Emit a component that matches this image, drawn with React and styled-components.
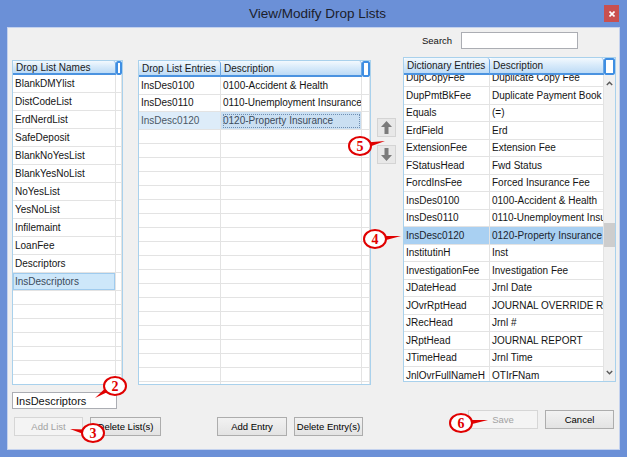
import React from "react";
import styled, { createGlobalStyle, css } from "styled-components";

const listNames = [
  "BlankDMYlist",
  "DistCodeList",
  "ErdNerdList",
  "SafeDeposit",
  "BlankNoYesList",
  "BlankYesNoList",
  "NoYesList",
  "YesNoList",
  "Infilemaint",
  "LoanFee",
  "Descriptors",
  "InsDescriptors",
];

const entries = [
  ["InsDes0100", "0100-Accident & Health"],
  ["InsDes0110", "0110-Unemployment Insurance"],
  ["InsDesc0120", "0120-Property Insurance"],
];

const dictionary = [
  ["DupCopyFee", "Duplicate Copy Fee"],
  ["DupPmtBkFee", "Duplicate Payment Book"],
  ["Equals", "(=)"],
  ["ErdField", "Erd"],
  ["ExtensionFee", "Extension Fee"],
  ["FStatusHead", "Fwd Status"],
  ["ForcdInsFee", "Forced Insurance Fee"],
  ["InsDes0100", "0100-Accident & Health"],
  ["InsDes0110", "0110-Unemployment Insurance"],
  ["InsDesc0120", "0120-Property Insurance"],
  ["InstitutinH", "Inst"],
  ["InvestigationFee", "Investigation Fee"],
  ["JDateHead", "Jrnl Date"],
  ["JOvrRptHead", "JOURNAL OVERRIDE R"],
  ["JRecHead", "Jrnl #"],
  ["JRptHead", "JOURNAL REPORT"],
  ["JTimeHead", "Jrnl Time"],
  ["JnlOvrFullNameH", "OTIrFNam"],
];

const GlobalStyle = createGlobalStyle`
  html, body {
    margin: 0;
    padding: 0;
    background: #ffffff;
  }
  body {
    font-family: "Liberation Sans", Arial, sans-serif;
  }
`;

const Window = styled.div`
  position: relative;
  width: 627px;
  height: 457px;
  box-sizing: border-box;
  background: #6b90d7;
  padding: 0 7px 7px 7px;
  display: flex;
  flex-direction: column;
`;

const TitleBar = styled.div`
  height: 27px;
  display: grid;
  grid-template-columns: 1fr auto 1fr;
  align-items: start;
`;

const Title = styled.div`
  grid-column: 2;
  margin-top: 6px;
  padding-left: 8px;
  font-size: 13.5px;
  color: #1b202b;
`;

const CloseButton = styled.div`
  grid-column: 3;
  justify-self: end;
  margin-top: 5px;
  margin-right: 1px;
  width: 15px;
  height: 17px;
  background: #c9504f;
  display: flex;
  align-items: center;
  justify-content: center;
`;

const Client = styled.div`
  flex: 1;
  background: #f0f0f0;
  border: 1px solid #c4d2ee;
  display: flex;
  padding: 4px 0 0 4px;
  min-height: 0;
`;

const Column = styled.div`
  display: flex;
  flex-direction: column;
  flex-shrink: 0;
  width: ${(p) => p.$w}px;
  margin-left: ${(p) => p.$ml || 0}px;
  padding-top: ${(p) => p.$pt || 0}px;
`;

const GridBox = styled.div`
  width: ${(p) => p.$w}px;
  height: 325px;
  box-sizing: border-box;
  border: 1px solid #a9d1ec;
  background: #ffffff;
  display: flex;
  flex-direction: column;
  overflow: hidden;
`;

const Row = styled.div`
  display: grid;
  grid-template-columns: ${(p) => p.$cols};
  height: ${(p) => p.$h}px;
  flex-shrink: 0;
`;

const HeaderCell = styled.div`
  box-sizing: border-box;
  background: linear-gradient(#f3f9fe, #d9ebfa 45%, #bddbf6);
  border-right: 1px solid #69a6e4;
  border-bottom: 2px solid #4b93e0;
  border-radius: 3px 3px 0 0;
  font-size: 10px;
  color: #1a1a1a;
  padding-left: 3px;
  display: flex;
  align-items: center;
  white-space: nowrap;
  overflow: hidden;
`;

const HeaderFiller = styled.div`
  box-sizing: border-box;
  background: #ffffff;
  border: 2px solid #3f8ee2;
  border-radius: 2px;
`;

const selStyles = {
  box: css`
    background: #cde7fa;
    box-shadow: inset 0 0 0 1px #9fcbee;
    color: #3b4a5a;
  `,
  dim: css`
    background: #ddecf9;
    color: #4a5866;
  `,
  focus: css`
    background: #cadff2;
    color: #3b4a5a;
    outline: 1px dotted #6f8fb2;
    outline-offset: -3px;
  `,
  hot: css`
    background: #a9d0f2;
    color: #1a2530;
  `,
};

const Cell = styled.div`
  box-sizing: border-box;
  border-right: 1px solid #e3e3e3;
  border-bottom: 1px solid #e3e3e3;
  font-size: 10px;
  color: #141414;
  padding-left: 2px;
  display: flex;
  align-items: center;
  white-space: nowrap;
  overflow: hidden;
  ${(p) => p.$sel && selStyles[p.$sel]}
`;

const GridBody = styled.div`
  flex: 1;
  display: flex;
  min-height: 0;
`;

const RowsArea = styled.div`
  flex: 1;
  overflow: hidden;
`;

const RowsScroll = styled.div`
  margin-top: ${(p) => p.$offset || 0}px;
`;

const ScrollBar = styled.div`
  width: 11px;
  background: #f0f0f0;
  display: flex;
  flex-direction: column;
  align-items: stretch;
`;

const ScrollArrow = styled.div`
  height: 17px;
  display: flex;
  align-items: center;
  justify-content: center;
`;

const ScrollTrack = styled.div`
  flex: 1;
`;

const ScrollThumb = styled.div`
  margin-top: ${(p) => p.$top}px;
  height: ${(p) => p.$h}px;
  background: #cdcdcd;
`;

const TextBox = styled.div`
  box-sizing: border-box;
  width: ${(p) => p.$w}px;
  height: 17px;
  margin-top: ${(p) => p.$mt || 0}px;
  background: #ffffff;
  border: 1px solid #abadb3;
  font-size: 11px;
  color: #111;
  padding-left: 3px;
  display: flex;
  align-items: center;
`;

const ButtonRow = styled.div`
  display: flex;
  gap: 7px;
  margin-top: ${(p) => p.$mt}px;
  padding-left: ${(p) => p.$pl || 0}px;
  padding-right: ${(p) => p.$pr || 0}px;
  justify-content: ${(p) => (p.$end ? "flex-end" : "flex-start")};
`;

const Button = styled.button`
  flex-shrink: 0;
  width: ${(p) => p.$w}px;
  height: 19px;
  padding: 0;
  font-family: inherit;
  font-size: 9.5px;
  border-radius: 0;
  border: 1px solid ${(p) => (p.disabled ? "#d6d6d6" : "#adadad")};
  background: ${(p) =>
    p.disabled ? "#f4f4f4" : "linear-gradient(#f2f2f2, #e3e3e3)"};
  color: ${(p) => (p.disabled ? "#a2a2a2" : "#000")};
`;

const MoveButton = styled.div`
  width: 19px;
  height: 19px;
  box-sizing: border-box;
  background: #e8e8e8;
  border: 1px solid #d4d4d4;
  display: flex;
  align-items: center;
  justify-content: center;
`;

const MoveStack = styled.div`
  display: flex;
  flex-direction: column;
  gap: 8px;
`;

const SearchRow = styled.div`
  display: flex;
  align-items: center;
  gap: 9px;
  padding-left: 19px;
  height: 16px;
  margin-bottom: 9px;
`;

const SearchLabel = styled.span`
  font-size: 9.5px;
  color: #111;
`;

const SearchInput = styled.div`
  box-sizing: border-box;
  width: 117px;
  height: 17px;
  background: #fff;
  border: 1px solid #abadb3;
`;

const CalloutWrap = styled.div`
  position: absolute;
  left: ${(p) => p.$x - 12}px;
  top: ${(p) => p.$y - 10}px;
  width: 24px;
  height: 20px;
`;

const CalloutSvg = styled.svg`
  position: absolute;
  left: 0;
  top: 0;
  overflow: visible;
`;

const CalloutNum = styled.span`
  position: absolute;
  inset: 0;
  display: flex;
  align-items: center;
  justify-content: center;
  font-family: "Liberation Serif", "Times New Roman", serif;
  font-weight: bold;
  font-size: 14px;
  color: #e00000;
  padding-top: 1px;
`;

function Callout({ x, y, tx, ty, n }) {
  const dx = tx - x;
  const dy = ty - y;
  const len = Math.hypot(dx, dy);
  const ux = dx / len;
  const uy = dy / len;
  const ex = 12 + ux * 10;
  const ey = 10 + uy * 8;
  const nx = -uy;
  const ny = ux;
  const pts = `${ex + nx * 2.2},${ey + ny * 2.2} ${ex - nx * 2.2},${
    ey - ny * 2.2
  } ${12 + dx},${10 + dy}`;
  return (
    <CalloutWrap $x={x} $y={y}>
      <CalloutSvg width="24" height="20">
        <polygon points={pts} fill="#e00000" />
        <ellipse
          cx="12"
          cy="10"
          rx="11"
          ry="9"
          fill="#ffffff"
          stroke="#e00000"
          strokeWidth="2"
        />
      </CalloutSvg>
      <CalloutNum>{n}</CalloutNum>
    </CalloutWrap>
  );
}

const ArrowIcon = ({ down }) => (
  <svg width="13" height="15" viewBox="0 0 13 15">
    <path
      d={down ? "M6.5 14 L12 8 H8.5 V1 H4.5 V8 H1 Z" : "M6.5 1 L12 7 H8.5 V14 H4.5 V7 H1 Z"}
      fill="#7b7b7b"
    />
  </svg>
);

const Chevron = ({ down }) => (
  <svg width="7" height="5" viewBox="0 0 7 5">
    <path
      d={down ? "M0.8 1 L3.5 3.8 L6.2 1" : "M0.8 4 L3.5 1.2 L6.2 4"}
      fill="none"
      stroke="#5a5a5a"
      strokeWidth="1.4"
    />
  </svg>
);

function emptyRows(count, cols, h) {
  return Array.from({ length: count }, (_, i) => (
    <Row key={`e${i}`} $cols={cols} $h={h}>
      <Cell />
      <Cell />
      {cols.split(" ").length > 2 && <Cell />}
    </Row>
  ));
}

export default function App() {
  const leftCols = "103px 6px";
  const midCols = "82px 141px 8px";
  const rightCols = "86px 114px";

  return (
    <>
      <GlobalStyle />
      <Window>
        <TitleBar>
          <Title>View/Modify Drop Lists</Title>
          <CloseButton>
            <svg width="6" height="6" viewBox="0 0 6 6">
              <path d="M0.5 0.5 L5.5 5.5 M5.5 0.5 L0.5 5.5" stroke="#fff" strokeWidth="1.6" />
            </svg>
          </CloseButton>
        </TitleBar>
        <Client>
          <Column $w={111} $pt={28}>
            <GridBox $w={111}>
              <Row $cols={leftCols} $h={14}>
                <HeaderCell>Drop List Names</HeaderCell>
                <HeaderFiller />
              </Row>
              {listNames.map((name, i) => (
                <Row key={name} $cols={leftCols} $h={18}>
                  <Cell $sel={i === listNames.length - 1 ? "box" : undefined}>{name}</Cell>
                  <Cell />
                </Row>
              ))}
              {emptyRows(8, leftCols, 14)}
            </GridBox>
            <TextBox $w={105} $mt={7}>InsDescriptors</TextBox>
            <ButtonRow $mt={8} $pl={2}>
              <Button $w={69} disabled>
                Add List
              </Button>
              <Button $w={71}>Delete List(s)</Button>
            </ButtonRow>
          </Column>

          <Column $w={233} $ml={15} $pt={28}>
            <GridBox $w={233}>
              <Row $cols={midCols} $h={16}>
                <HeaderCell>Drop List Entries</HeaderCell>
                <HeaderCell>Description</HeaderCell>
                <HeaderFiller />
              </Row>
              {entries.map(([code, desc], i) => {
                const selected = i === entries.length - 1;
                return (
                  <Row key={code} $cols={midCols} $h={17.5}>
                    <Cell $sel={selected ? "dim" : undefined}>{code}</Cell>
                    <Cell $sel={selected ? "focus" : undefined}>{desc}</Cell>
                    <Cell />
                  </Row>
                );
              })}
              {emptyRows(19, midCols, 14)}
            </GridBox>
            <ButtonRow $mt={32} $pr={8} $end>
              <Button $w={70}>Add Entry</Button>
              <Button $w={69}>Delete Entry(s)</Button>
            </ButtonRow>
          </Column>

          <Column $w={19} $ml={6} $pt={86}>
            <MoveStack>
              <MoveButton>
                <ArrowIcon />
              </MoveButton>
              <MoveButton>
                <ArrowIcon down />
              </MoveButton>
            </MoveStack>
          </Column>

          <Column $w={213} $ml={7}>
            <SearchRow>
              <SearchLabel>Search</SearchLabel>
              <SearchInput />
            </SearchRow>
            <GridBox $w={213}>
              <Row $cols="86px 114px 11px" $h={17}>
                <HeaderCell>Dictionary Entries</HeaderCell>
                <HeaderCell>Description</HeaderCell>
                <HeaderFiller />
              </Row>
              <GridBody>
                <RowsArea>
                  <RowsScroll $offset={-5.5}>
                    {dictionary.map(([code, desc]) => {
                      const selected = code === "InsDesc0120";
                      return (
                        <Row key={code} $cols={rightCols} $h={17.5}>
                          <Cell $sel={selected ? "hot" : undefined}>{code}</Cell>
                          <Cell $sel={selected ? "hot" : undefined}>{desc}</Cell>
                        </Row>
                      );
                    })}
                  </RowsScroll>
                </RowsArea>
                <ScrollBar>
                  <ScrollArrow>
                    <Chevron />
                  </ScrollArrow>
                  <ScrollTrack>
                    <ScrollThumb $top={131} $h={24} />
                  </ScrollTrack>
                  <ScrollArrow>
                    <Chevron down />
                  </ScrollArrow>
                </ScrollBar>
              </GridBody>
            </GridBox>
            <ButtonRow $mt={28} $pr={2} $end>
              <Button $w={70} disabled>
                Save
              </Button>
              <Button $w={69}>Cancel</Button>
            </ButtonRow>
          </Column>
        </Client>

        <Callout n="2" x={115} y={386} tx={95} ty={398} />
        <Callout n="3" x={93} y={433} tx={70} ty={429} />
        <Callout n="5" x={360} y={146} tx={385} ty={141} />
        <Callout n="4" x={375} y={239} tx={401} ty={236} />
        <Callout n="6" x={461} y={423} tx={488} ty={420} />
      </Window>
    </>
  );
}
